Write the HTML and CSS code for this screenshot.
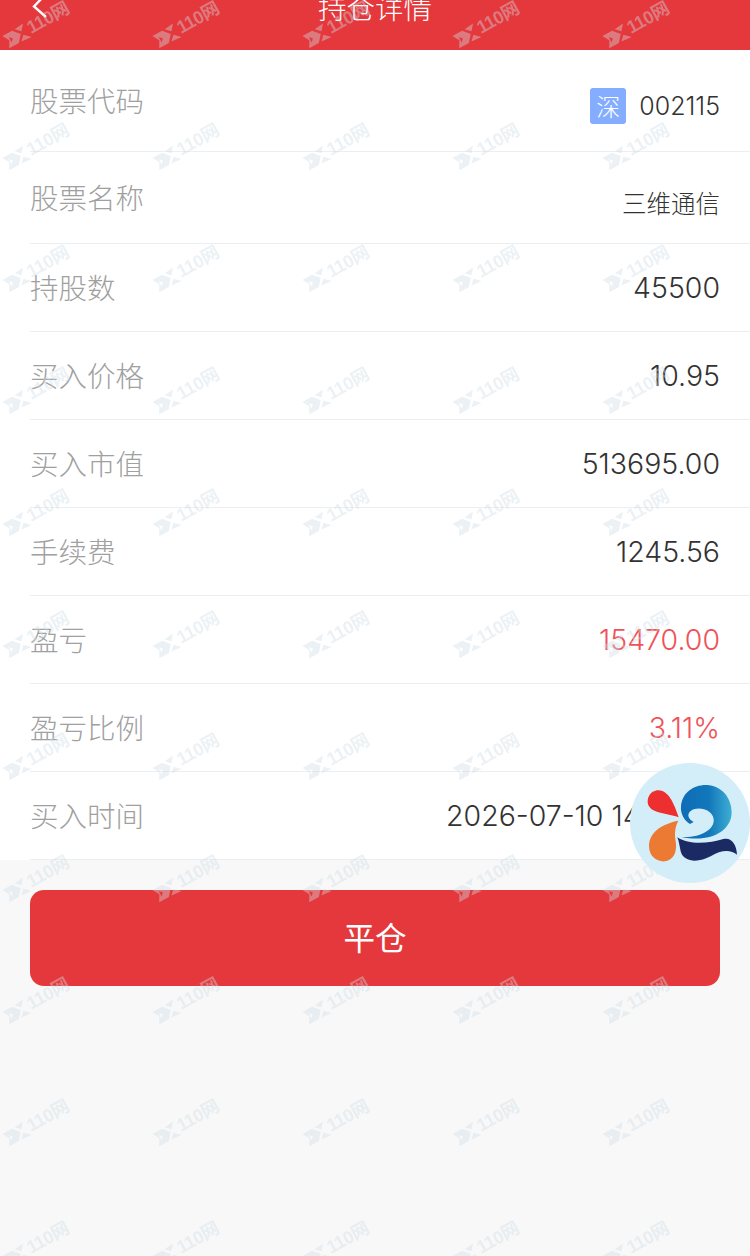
FILE: index.html
```html
<!DOCTYPE html>
<html lang="zh-CN">
<head>
    <meta charset="UTF-8">
    <meta name="viewport" content="width=device-width, initial-scale=1.0">
    <title>持仓详情</title>
    <link rel="stylesheet" href="styles.css">
</head>
<body>

    <div class="page">
        <header class="topbar">
            <svg class="back" width="16" height="24" viewBox="0 0 16 24">
                <path d="M11 1 L2 10.5 L14 21" fill="none" stroke="#fff" stroke-width="2.4"/>
            </svg>
            <h1 class="title">持仓详情</h1>
        </header>

        <div class="list">
            <div class="row row-code">
                <span class="label">股票代码</span>
                <span class="code"><i class="market">深</i><span class="code-num">002115</span></span>
            </div>
            <div class="row row-name">
                <span class="label">股票名称</span>
                <span class="name">三维通信</span>
            </div>
            <div class="row">
                <span class="label">持股数</span>
                <span class="value">45500</span>
            </div>
            <div class="row">
                <span class="label">买入价格</span>
                <span class="value">10.95</span>
            </div>
            <div class="row">
                <span class="label">买入市值</span>
                <span class="value">513695.00</span>
            </div>
            <div class="row">
                <span class="label">手续费</span>
                <span class="value">1245.56</span>
            </div>
            <div class="row">
                <span class="label">盈亏</span>
                <span class="value up">15470.00</span>
            </div>
            <div class="row">
                <span class="label">盈亏比例</span>
                <span class="value up">3.11%</span>
            </div>
            <div class="row">
                <span class="label">买入时间</span>
                <span class="value">2026-07-10 14:31:45</span>
            </div>
        </div>

        <div class="actions">
            <button class="btn">平仓</button>
        </div>

        <!-- watermark tiled over the whole page -->
        <svg class="watermark" width="750" height="1256">
            <defs>
                <pattern id="wm" width="150" height="122" patternUnits="userSpaceOnUse">
                    <g transform="rotate(-29 31 34)">
                        <g transform="translate(31 34)">
                            <path class="wm-mark" fill-rule="evenodd" d="M-26 -12 H-15 L-9 -5 L-15 2 H-26 L-22 -5 Z M-21 -8 L-18 -5 L-21 -2 Z"/>
                            <polygon class="wm-mark" points="-12,-12 -2,-13 -7,-7"/>
                            <polygon class="wm-mark" points="-7,-3 -1,3 -12,2"/>
                        </g>
                        <text x="31" y="34" class="wm-text">110网</text>
                    </g>
                </pattern>
            </defs>
            <rect width="750" height="1256" fill="url(#wm)"/>
        </svg>

        <svg class="float-logo" width="120" height="120" viewBox="90 40 360 360">
            <defs>
                <linearGradient id="wave" x1="0" y1="0" x2="1" y2="0">
                    <stop offset="0" stop-color="#0e6db6"/>
                    <stop offset="0.55" stop-color="#1277bb"/>
                    <stop offset="1" stop-color="#3eaed3"/>
                </linearGradient>
            </defs>
            <circle cx="270" cy="220" r="180" fill="#d3eef9"/>
            <path d="M236 203 C222 160 205 122 175 122 C150 122 136 150 147 170 C160 192 205 192 236 203 Z" fill="#ee2f2f"/>
            <path d="M235 213 C190 222 147 245 147 290 C147 320 170 337 195 335 C222 332 232 305 227 275 C223 252 225 232 235 213 Z" fill="#ec7a33"/>
            <path d="M243 170 C246 130 280 105 320 106 C365 108 396 145 395 190 C393 245 330 280 245 262 C300 265 345 240 341 208 C337 180 295 168 272 184 C260 194 264 208 281 217 L270 223 C252 212 241 192 243 170 Z" fill="url(#wave)"/>
            <path d="M232 263 C270 288 330 280 370 268 C395 262 410 285 411 315 C390 298 362 302 332 320 C295 340 250 338 242 305 C238 287 237 275 232 263 Z" fill="#1b2a63"/>
        </svg>
    </div>

</body>
</html>
```

FILE: styles.css
```css
* {
    box-sizing: border-box;
}

html, body {
    margin: 0;
    padding: 0;
}

body {
    font-family: Inter, "Noto Sans CJK SC", sans-serif;
    background-color: #f8f8f8;
}

.page {
    position: relative;
    width: 750px;
    height: 1256px;
    overflow: hidden;
}

.topbar {
    height: 50px;
    padding: 0 33px 26px;
    background-color: #e5383c;
    display: flex;
    align-items: flex-end;
    position: relative;
    justify-content: center;
}

.back {
    position: absolute;
    left: 32px;
    top: -4px;
}

.title {
    margin: 0;
    font-size: 28.5px;
    font-weight: 300;
    line-height: 34px;
    color: #fff;
    font-family: "Noto Sans CJK SC", sans-serif;
}

.list {
    background: #fff;
}

.row {
    height: 88px;
    margin-left: 30px;
    padding-right: 30px;
    border-bottom: 1px solid #eceff1;
    display: flex;
    justify-content: space-between;
    align-items: center;
}

.row-code {
    height: 102px;
}

.row-name {
    height: 92px;
}

.label {
    margin-bottom: 2px;
    font-family: "Noto Sans CJK SC", sans-serif;
    font-size: 28.5px;
    font-weight: 300;
    color: #a0a0a0;
}

.value {
    font-size: 28.5px;
    font-weight: 300;
    color: #333;
}

.value.up {
    color: #f0525a;
}

.code {
    margin-top: 10px;
    display: flex;
    align-items: center;
    gap: 13px;
}

.market {
    width: 36px;
    height: 36px;
    border-radius: 3px;
    background-color: #85adff;
    color: #fff;
    font-family: "Noto Sans CJK SC", sans-serif;
    font-style: normal;
    font-weight: 300;
    font-size: 24px;
    line-height: 36px;
    text-align: center;
}

.code-num {
    font-size: 25px;
    font-weight: 300;
    color: #333;
}

.name {
    margin-top: 10px;
    font-family: "Noto Sans CJK SC", sans-serif;
    font-size: 24.5px;
    font-weight: 300;
    color: #333;
}

.actions {
    padding: 30px 30px 0;
}

.btn {
    display: block;
    width: 100%;
    height: 96px;
    padding: 0 0 4px;
    border: none;
    border-radius: 14px;
    background-color: #e5383c;
    color: #fff;
    font-family: "Noto Sans CJK SC", sans-serif;
    font-size: 31.5px;
    font-weight: 400;
}

.watermark {
    position: absolute;
    left: 0;
    top: 0;
    pointer-events: none;
}

.wm-mark {
    fill: rgba(205, 220, 228, 0.4);
}

.wm-text {
    font-family: "Liberation Sans", "Noto Sans CJK SC", sans-serif;
    font-size: 18px;
    font-weight: 700;
    letter-spacing: -0.4px;
    fill: rgba(205, 220, 228, 0.4);
}

.float-logo {
    position: absolute;
    left: 630px;
    top: 763px;
}
```
